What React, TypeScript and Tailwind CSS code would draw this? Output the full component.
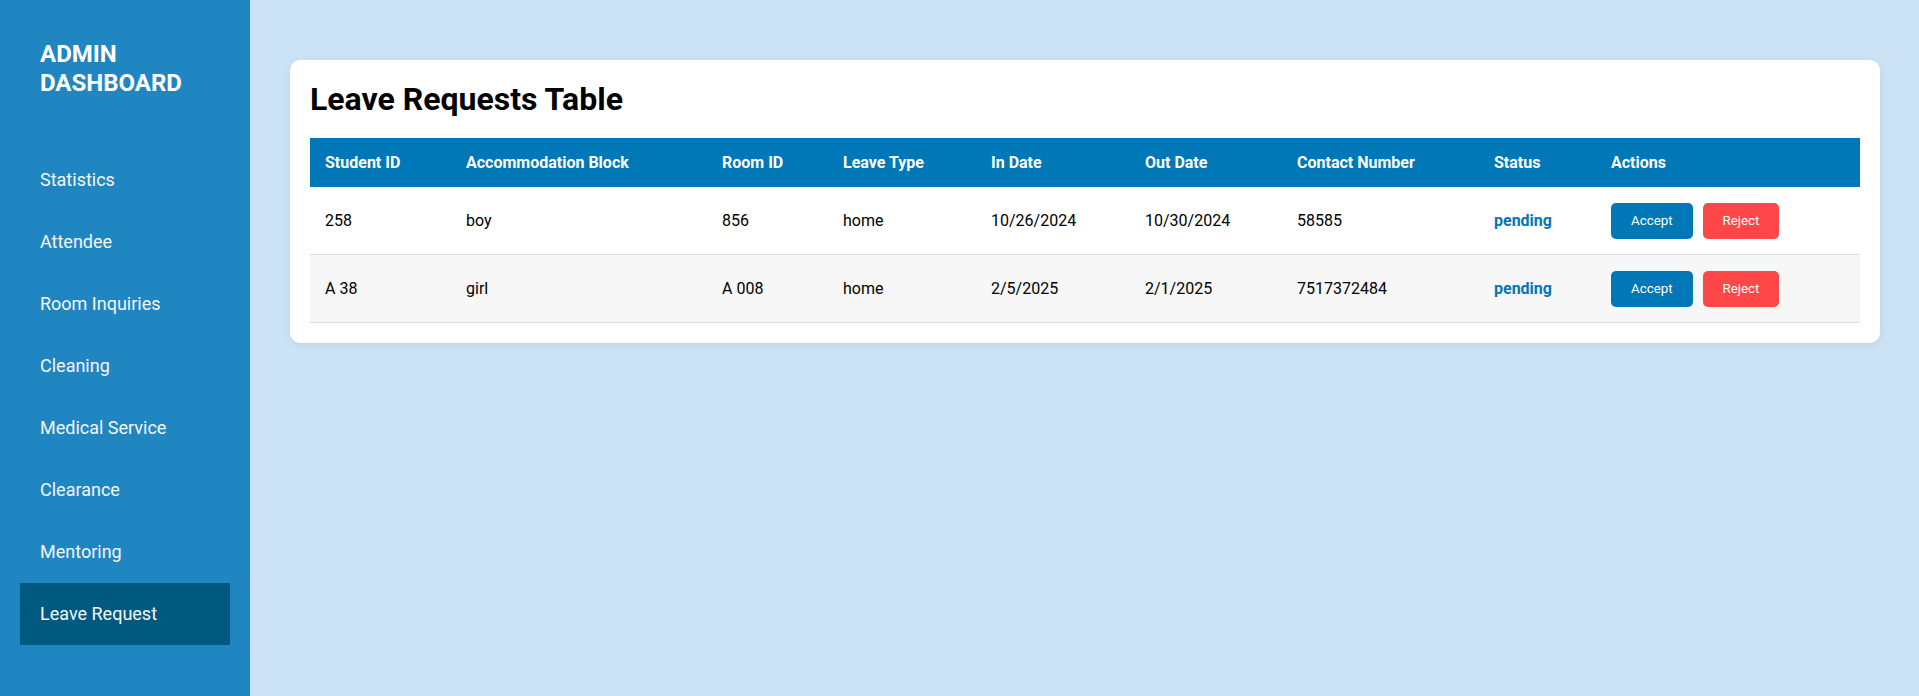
import React from "react";

const nav = [
  "Statistics",
  "Attendee",
  "Room Inquiries",
  "Cleaning",
  "Medical Service",
  "Clearance",
  "Mentoring",
  "Leave Request",
];

const rows = [
  {
    id: "258",
    block: "boy",
    room: "856",
    type: "home",
    inDate: "10/26/2024",
    outDate: "10/30/2024",
    contact: "58585",
    status: "pending",
  },
  {
    id: "A 38",
    block: "girl",
    room: "A 008",
    type: "home",
    inDate: "2/5/2025",
    outDate: "2/1/2025",
    contact: "7517372484",
    status: "pending",
  },
];

export default function App() {
  return (
    <div
      className="flex min-h-screen h-[696px] w-full"
      style={{ fontFamily: "Roboto, 'Noto Sans', sans-serif" }}
    >
      <aside className="w-[250px] shrink-0 bg-[#2086c2] p-5 text-white">
        <h1 className="px-5 pt-5 text-[24px] font-bold leading-[1.2] text-white">
          ADMIN
          <br />
          DASHBOARD
        </h1>
        <nav className="mt-[51px] flex flex-col">
          {nav.map((item) => (
            <div
              key={item}
              className={`flex h-[62px] items-center px-5 text-[18px] leading-[normal] text-[#f4f6f8] ${
                item === "Leave Request" ? "bg-[#005a7f]" : ""
              }`}
            >
              {item}
            </div>
          ))}
        </nav>
      </aside>
      <main className="flex-1 bg-[#cce3f6] px-10 pt-[60px]">
        <div className="rounded-[10px] bg-white p-5 shadow-[0_2px_8px_rgba(0,0,0,0.08)]">
          <h2 className="mb-5 text-[32px] font-bold leading-[normal] text-black">
            Leave Requests Table
          </h2>
          <table className="w-full table-fixed border-collapse text-left text-[16px] leading-[normal] text-black">
            <thead>
              <tr className="bg-[#0077b7] text-white">
                <th className="w-[141px] p-[15px] font-bold">Student ID</th>
                <th className="w-[256px] p-[15px] font-bold">Accommodation Block</th>
                <th className="w-[121px] p-[15px] font-bold">Room ID</th>
                <th className="w-[148px] p-[15px] font-bold">Leave Type</th>
                <th className="w-[154px] p-[15px] font-bold">In Date</th>
                <th className="w-[152px] p-[15px] font-bold">Out Date</th>
                <th className="w-[197px] p-[15px] font-bold">Contact Number</th>
                <th className="w-[117px] p-[15px] font-bold">Status</th>
                <th className="w-[264px] p-[15px] font-bold">Actions</th>
              </tr>
            </thead>
            <tbody>
              {rows.map((r, i) => (
                <tr
                  key={r.id}
                  className={`border-b border-[#dddddd] ${i % 2 === 1 ? "bg-[#f7f7f7]" : "bg-white"}`}
                >
                  <td className="px-[15px] py-[15px]">{r.id}</td>
                  <td className="px-[15px] py-[15px]">{r.block}</td>
                  <td className="px-[15px] py-[15px]">{r.room}</td>
                  <td className="px-[15px] py-[15px]">{r.type}</td>
                  <td className="px-[15px] py-[15px]">{r.inDate}</td>
                  <td className="px-[15px] py-[15px]">{r.outDate}</td>
                  <td className="px-[15px] py-[15px]">{r.contact}</td>
                  <td className="px-[15px] py-[15px] font-bold text-[#0077b7]">
                    {r.status}
                  </td>
                  <td className="px-[15px] py-[15px]">
                    <div className="flex gap-2.5 py-[0.5px]">
                      <button className="rounded-[5px] bg-[#0077b7] px-5 py-2.5 text-[13.33px] leading-[16px] text-white">
                        Accept
                      </button>
                      <button className="rounded-[5px] bg-[#ff4747] px-5 py-2.5 text-[13.33px] leading-[16px] text-white">
                        Reject
                      </button>
                    </div>
                  </td>
                </tr>
              ))}
            </tbody>
          </table>
        </div>
      </main>
    </div>
  );
}
